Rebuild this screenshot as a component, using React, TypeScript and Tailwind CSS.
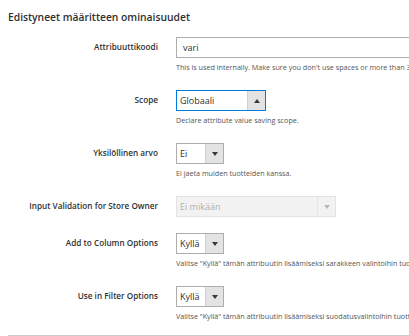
const FONT = { fontFamily: '"Open Sans", "Noto Sans", sans-serif' };

function Arrow({ up = false, muted = false }: { up?: boolean; muted?: boolean }) {
  return (
    <svg width="6" height="4" viewBox="0 0 6 4" className="block">
      <polygon
        points={up ? '0,4 6,4 3,0' : '0,0 6,0 3,4'}
        fill={muted ? '#b8b8b8' : '#41362f'}
      />
    </svg>
  );
}

function Select({
  value,
  width,
  up = false,
  focus = false,
  disabled = false,
}: {
  value: string;
  width: string;
  up?: boolean;
  focus?: boolean;
  disabled?: boolean;
}) {
  const border = focus
    ? 'border-[#007bdb]'
    : disabled
    ? 'border-[#e3e3e3]'
    : 'border-[#adadad]';
  return (
    <div
      className={`flex h-[21px] ${width} border ${border} ${disabled ? 'bg-[#f2f2f2]' : 'bg-white'}`}
    >
      <div
        className={`flex-1 flex items-center pl-[3px] text-[9px] ${disabled ? 'text-[#b0b0b0]' : 'text-[#303030]'}`}
      >
        {value}
      </div>
      <div
        className={`w-[18px] flex items-center justify-center ${disabled ? 'border-l border-[#e6e6e6]' : 'bg-[#e3e3e3] border-l border-[#d0d0d0]'}`}
      >
        <Arrow up={up} muted={disabled} />
      </div>
    </div>
  );
}

function Row({
  label,
  note,
  children,
  className = 'mb-[17px]',
}: {
  label: string;
  note?: string;
  children: React.ReactNode;
  className?: string;
}) {
  return (
    <div className={`flex ${className}`}>
      <div className="w-[150px] shrink-0 h-[21px] flex items-center justify-end text-[8.2px] font-semibold text-[#303030] whitespace-nowrap">
        {label}
      </div>
      <div className="ml-[18px] flex-1 min-w-0">
        {children}
        {note && (
          <div className="mt-[3px] text-[7.2px] leading-[12px] text-[#555] whitespace-nowrap">
            {note}
          </div>
        )}
      </div>
    </div>
  );
}

export default function App() {
  return (
    <div className="w-[409px] h-[336px] overflow-hidden bg-white" style={FONT}>
      <div className="pl-[8px] pt-[10px]">
        <h2 className="text-[10.3px] leading-[14px] font-semibold text-[#303030] mb-[13px]">
          Edistyneet määritteen ominaisuudet
        </h2>

        <Row label="Attribuuttikoodi" note="This is used internally. Make sure you don't use spaces or more than 30 symbols.">
          <div className="h-[21px] w-[260px] border border-[#adadad] flex items-center pl-[6px] text-[9px] text-[#303030]">
            vari
          </div>
        </Row>

        <Row label="Scope" note="Declare attribute value saving scope.">
          <Select value="Globaali" width="w-[90px]" up focus />
        </Row>

        <Row label="Yksilöllinen arvo" note="Ei jaeta muiden tuotteiden kanssa.">
          <Select value="Ei" width="w-[48px]" />
        </Row>

        <Row label="Input Validation for Store Owner" className="mb-[16px]">
          <Select value="Ei mikään" width="w-[160px]" disabled />
        </Row>

        <Row
          label="Add to Column Options"
          note={'Valitse "Kyllä" tämän attribuutin lisäämiseksi sarakkeen valintoihin tuotteiden ruudukossa.'}
        >
          <Select value="Kyllä" width="w-[48px]" />
        </Row>

        <Row
          label="Use in Filter Options"
          note={'Valitse "Kyllä" tämän attribuutin lisäämiseksi suodatusvalintoihin tuotteiden ruudukossa.'}
          className="mb-[13px]"
        >
          <Select value="Kyllä" width="w-[48px]" />
        </Row>

        <div className="border-t border-[#cccccc]" />
      </div>
    </div>
  );
}
